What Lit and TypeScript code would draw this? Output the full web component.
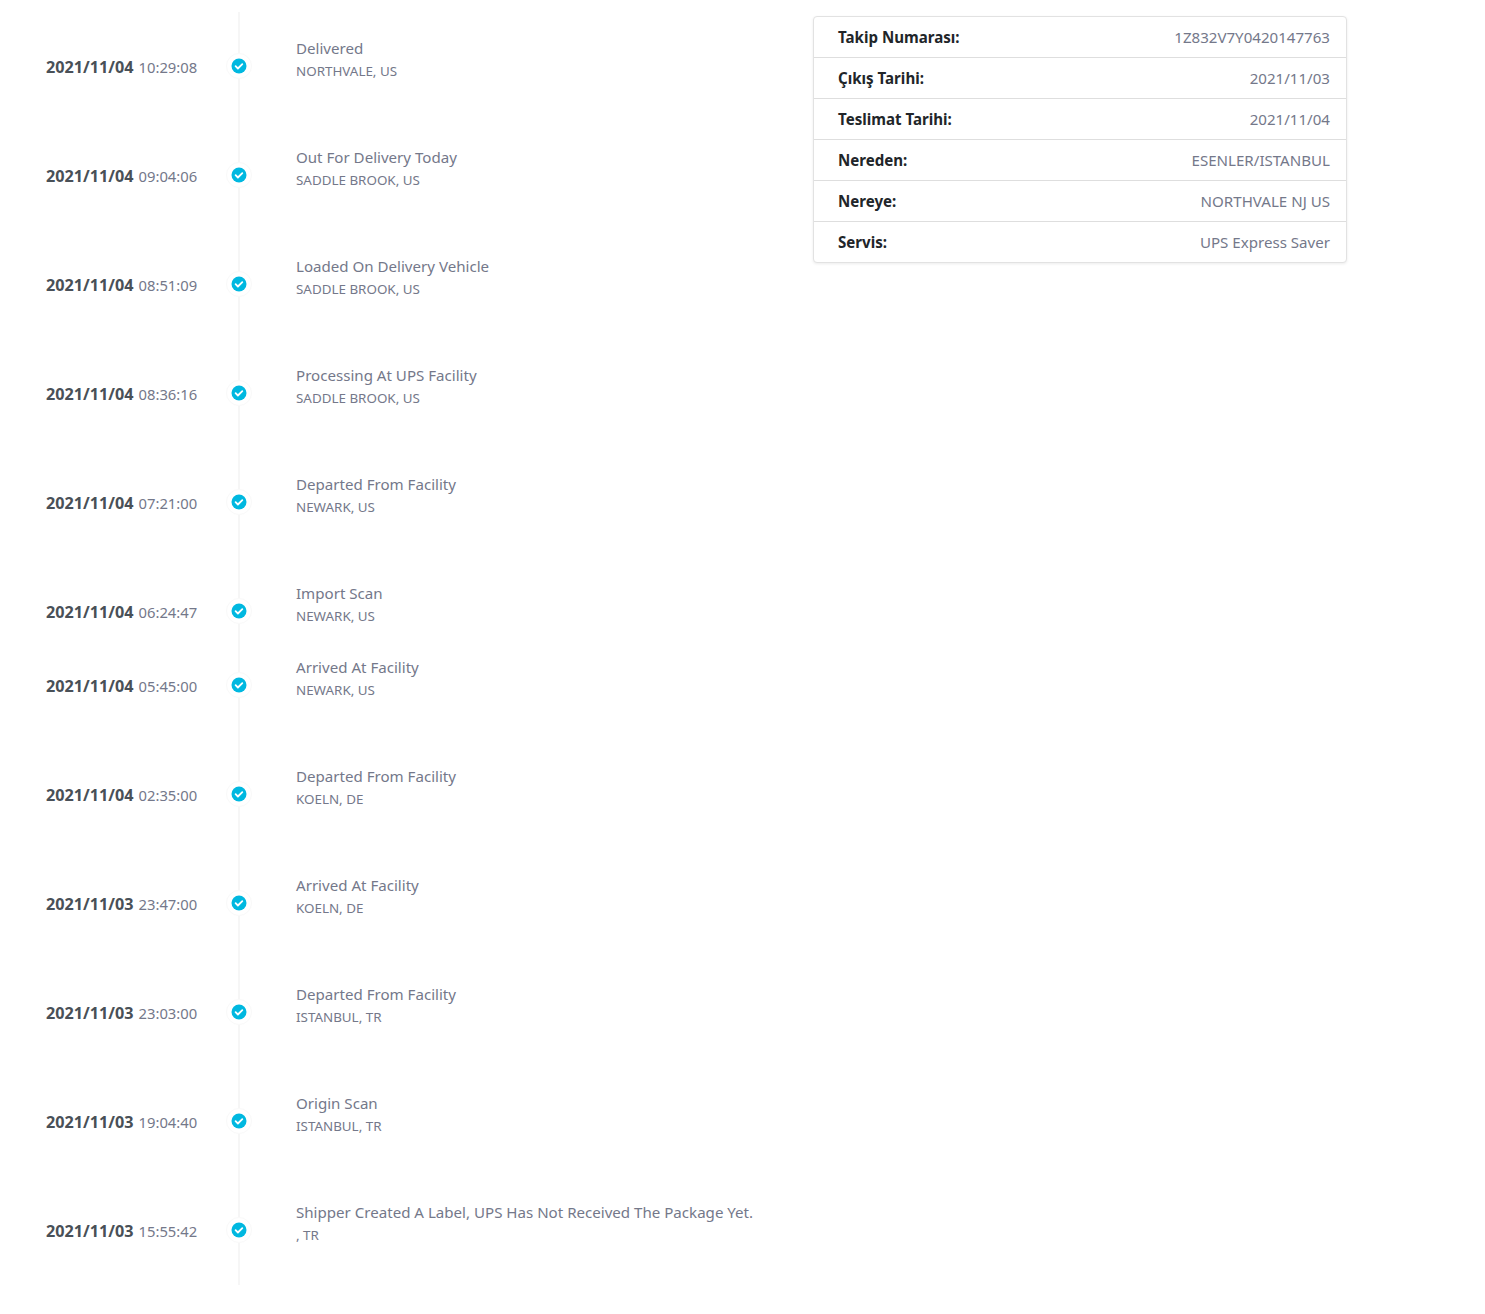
import { LitElement, html, css } from "lit";
import { customElement } from "lit/decorators.js";

const events: [string, string, string, string, boolean?][] = [
  ["2021/11/04", "10:29:08", "Delivered", "NORTHVALE, US"],
  ["2021/11/04", "09:04:06", "Out For Delivery Today", "SADDLE BROOK, US"],
  ["2021/11/04", "08:51:09", "Loaded On Delivery Vehicle", "SADDLE BROOK, US"],
  ["2021/11/04", "08:36:16", "Processing At UPS Facility", "SADDLE BROOK, US"],
  ["2021/11/04", "07:21:00", "Departed From Facility", "NEWARK, US"],
  ["2021/11/04", "06:24:47", "Import Scan", "NEWARK, US", true],
  ["2021/11/04", "05:45:00", "Arrived At Facility", "NEWARK, US"],
  ["2021/11/04", "02:35:00", "Departed From Facility", "KOELN, DE"],
  ["2021/11/03", "23:47:00", "Arrived At Facility", "KOELN, DE"],
  ["2021/11/03", "23:03:00", "Departed From Facility", "ISTANBUL, TR"],
  ["2021/11/03", "19:04:40", "Origin Scan", "ISTANBUL, TR"],
  ["2021/11/03", "15:55:42", "Shipper Created A Label, UPS Has Not Received The Package Yet.", ", TR"],
];

const info: [string, string][] = [
  ["Takip Numarası:", "1Z832V7Y0420147763"],
  ["Çıkış Tarihi:", "2021/11/03"],
  ["Teslimat Tarihi:", "2021/11/04"],
  ["Nereden:", "ESENLER/ISTANBUL"],
  ["Nereye:", "NORTHVALE NJ US"],
  ["Servis:", "UPS Express Saver"],
];

@customElement("app-root")
export class AppRoot extends LitElement {
  static styles = css`
    :host {
      display: block;
      font-family: "Noto Sans", "Open Sans", sans-serif;
      background: #fff;
      min-height: 1314px;
      color: #74788a;
    }
    .page {
      display: flex;
      align-items: flex-start;
      padding: 12px 0 0 46px;
    }
    .timeline {
      position: relative;
      width: 767px;
      flex: none;
      padding: 17px 0 18px;
      display: flex;
      flex-direction: column;
      gap: 35px;
    }
    .timeline::before {
      content: "";
      position: absolute;
      left: 192px;
      top: 0;
      bottom: 0;
      width: 2px;
      background: #f6f6f6;
    }
    .event {
      display: grid;
      grid-template-columns: 171px 50px 1fr;
      height: 74px;
      align-items: center;
    }
    .event.tight {
      margin-bottom: -35px;
    }
    .when {
      display: flex;
      align-items: baseline;
      gap: 5px;
      font-size: 14.8px;
      white-space: nowrap;
      padding-top: 1px;
    }
    .when b {
      font-size: 16.2px;
      font-weight: 700;
      color: #495057;
    }
    .dot {
      position: relative;
      width: 26px;
      height: 26px;
      border-radius: 50%;
      background: #fff;
      border: 1px solid #f9f9f9;
      box-sizing: border-box;
      display: flex;
      align-items: center;
      justify-content: center;
      margin-left: 9px;
    }
    .dot svg {
      display: block;
    }
    .text {
      align-self: start;
      padding: 8px 0 0 29px;
      white-space: nowrap;
    }
    .title {
      font-size: 15.1px;
      line-height: 22px;
    }
    .place {
      font-size: 13.4px;
      line-height: 22px;
      margin-top: 1px;
    }
    .card {
      width: 534px;
      box-sizing: border-box;
      margin-top: 4px;
      flex: none;
      border: 1px solid #e2e2e2;
      border-radius: 4px;
      box-shadow: 0 1px 3px rgba(0, 0, 0, 0.08);
      background: #fff;
    }
    .row {
      display: flex;
      justify-content: space-between;
      align-items: center;
      height: 40px;
      padding: 0 16px 0 24px;
      font-size: 15.1px;
      border-bottom: 1px solid #dedede;
    }
    .row:last-child {
      border-bottom: none;
    }
    .row b {
      font-weight: 700;
      color: #212529;
    }
  `;

  render() {
    return html`<div class="page">
      <div class="timeline">
        ${events.map(
          ([d, t, title, place, tight]) => html`<div class="event ${tight ? "tight" : ""}">
            <div class="when"><b>${d}</b><span>${t}</span></div>
            <div class="dot">
              <svg width="16" height="16" viewBox="0 0 16 16">
                <circle cx="8" cy="8" r="7.5" fill="#00b8e0" />
                <path d="M4.6 8.2l2.3 2.3 4.4-4.4" fill="none" stroke="#fff" stroke-width="1.8" stroke-linecap="round" stroke-linejoin="round" />
              </svg>
            </div>
            <div class="text">
              <div class="title">${title}</div>
              <div class="place">${place}</div>
            </div>
          </div>`
        )}
      </div>
      <div class="card">
        ${info.map(([k, v]) => html`<div class="row"><b>${k}</b><span>${v}</span></div>`)}
      </div>
    </div>`;
  }
}
